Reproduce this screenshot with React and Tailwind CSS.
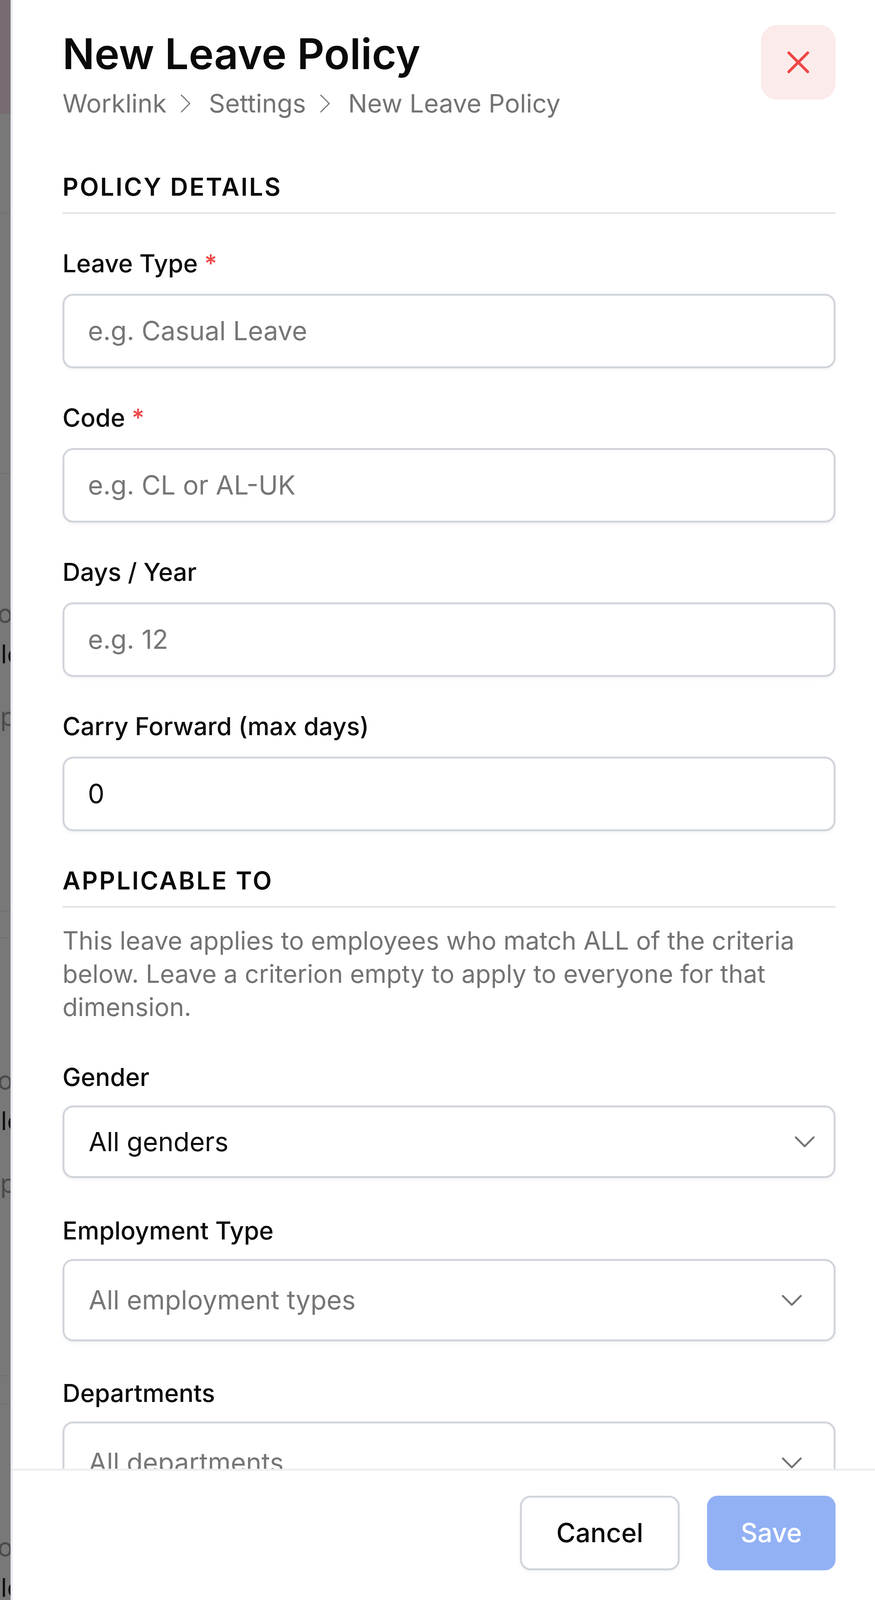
import { X, ChevronRight, ChevronDown } from 'lucide-react';

function Backdrop() {
  // dimmed page content peeking out behind the sheet
  const groups = [1550, 2745, 3940];
  const lines = [545, 1211, 2331, 2400, 3521, 3594];
  return (
    <div className="relative w-[27px] shrink-0 overflow-hidden bg-[#787878]">
      <div className="h-[292px] bg-[#766c72]"></div>
      {lines.map((y) => (
        <div key={y} className="absolute left-0 right-0 h-[2px] bg-[#6f6f6f]" style={{ top: y }}></div>
      ))}
      {groups.map((y) => (
        <div key={y} className="absolute left-0 h-[330px] w-[27px] overflow-hidden" style={{ top: y }}>
          <div className="absolute left-[-46px] top-[-20px] text-[66px] leading-[80px] text-[#4a4a4a]">oo</div>
          <div className="absolute left-[2px] top-[84px] text-[66px] leading-[80px] text-[#111]">le</div>
          <div className="absolute left-[-40px] top-[244px] text-[66px] leading-[80px] text-[#4a4a4a]">pp/</div>
        </div>
      ))}
    </div>
  );
}

function SectionHeader({ title, className = '' }) {
  return (
    <div className={`border-b-[5px] border-[#e5e7eb] pb-[20px] ${className}`}>
      <h2 className="text-[63px] font-semibold uppercase leading-[90px] tracking-[0.06em] text-[#0a0a0a]">{title}</h2>
    </div>
  );
}

function Label({ children, required }) {
  return (
    <label className="block text-[63px] font-medium leading-[90px] text-[#0a0a0a]">
      {children}
      {required && <span className="text-[#ef4444]"> *</span>}
    </label>
  );
}

function TextField({ label, placeholder, value, required, className = '' }) {
  return (
    <div className={className}>
      <Label required={required}>{label}</Label>
      <div className="mt-[33px] flex h-[191px] items-center rounded-[27px] border-[5px] border-[#d1d5db] bg-white pl-[60px] shadow-[0_5px_10px_rgba(0,0,0,0.04)]">
        {value ? (
          <span className="text-[67px] text-[#0a0a0a]">{value}</span>
        ) : (
          <span className="text-[67px] text-[#767676]">{placeholder}</span>
        )}
      </div>
    </div>
  );
}

function SelectField({ label, text, selected, multi, className = '' }) {
  return (
    <div className={className}>
      <Label>{label}</Label>
      <div
        className={`mt-[28px] flex items-center justify-between rounded-[27px] border-[5px] border-[#d1d5db] bg-white pl-[62px] shadow-[0_5px_10px_rgba(0,0,0,0.04)] ${
          multi ? 'h-[211px] pr-[61px]' : 'h-[186px] pr-[28px]'
        }`}
      >
        <span className={`text-[67px] ${selected ? 'text-[#0a0a0a]' : 'text-[#767676]'}`}>{text}</span>
        <ChevronDown size={92} strokeWidth={1.25} color="#737373" />
      </div>
    </div>
  );
}

export default function App() {
  return (
    <div className="flex h-screen w-full overflow-hidden bg-[#787878] font-['Inter','Noto_Sans',sans-serif]">
      <Backdrop />

      <aside className="flex min-h-0 flex-1 flex-col overflow-hidden border-l-[5px] border-[#e6e9ee] bg-white">
        <div className="min-h-0 flex-1 overflow-hidden pl-[128px] pr-[101px] pt-[64px]">
          {/* Header */}
          <div className="flex items-start justify-between">
            <div>
              <h1 className="text-[108px] font-semibold leading-[148px] text-[#0a0a0a]">New Leave Policy</h1>
              <nav className="mt-[8px] flex items-center text-[65px] leading-[90px] text-[#737373]">
                <span>Worklink</span>
                <ChevronRight size={86} strokeWidth={0.8} className="ml-[6px] mr-[16px]" />
                <span>Settings</span>
                <ChevronRight size={86} strokeWidth={0.8} className="ml-[6px] mr-[16px]" />
                <span>New Leave Policy</span>
              </nav>
            </div>
            <button className="flex h-[191px] w-[191px] items-center justify-center rounded-[40px] bg-[#fcebeb]">
              <X size={97} strokeWidth={1.75} color="#ef4444" />
            </button>
          </div>

          {/* Policy details */}
          <SectionHeader title="Policy Details" className="mt-[123px]" />
          <TextField className="mt-[81px]" label="Leave Type" placeholder="e.g. Casual Leave" required />
          <TextField className="mt-[81px]" label="Code" placeholder="e.g. CL or AL-UK" required />
          <TextField className="mt-[81px]" label="Days / Year" placeholder="e.g. 12" />
          <TextField className="mt-[81px]" label="Carry Forward (max days)" value="0" />

          {/* Applicable to */}
          <SectionHeader title="Applicable To" className="mt-[81px]" />
          <p className="mt-[41px] text-[64px] leading-[85px] text-[#737373]">
            This leave applies to employees who match ALL of the criteria below. Leave a criterion empty to apply to everyone for that dimension.
          </p>

          <SelectField className="mt-[92px]" label="Gender" text="All genders" selected />
          <SelectField className="mt-[89px]" label="Employment Type" text="All employment types" multi />
          <SelectField className="mt-[87px]" label="Departments" text="All departments" multi />
          <SelectField className="mt-[84px]" label="Designations" text="All designations" multi />

          <div className="mt-[86px]">
            <Label>Applies To (Locations)</Label>
          </div>
        </div>

        {/* Footer */}
        <footer className="flex h-[336px] shrink-0 items-start justify-end gap-[70px] border-t-[5px] border-[#eceef1] pr-[101px] pt-[64px]">
          <button className="flex h-[191px] w-[409px] items-center justify-center rounded-[27px] border-[5px] border-[#d1d5db] bg-white text-[67px] font-medium text-[#0a0a0a] shadow-[0_5px_10px_rgba(0,0,0,0.04)]">
            Cancel
          </button>
          <button className="flex h-[191px] w-[329px] items-center justify-center rounded-[27px] bg-[#92b1f4] text-[67px] font-medium text-white">
            Save
          </button>
        </footer>
      </aside>
    </div>
  );
}
